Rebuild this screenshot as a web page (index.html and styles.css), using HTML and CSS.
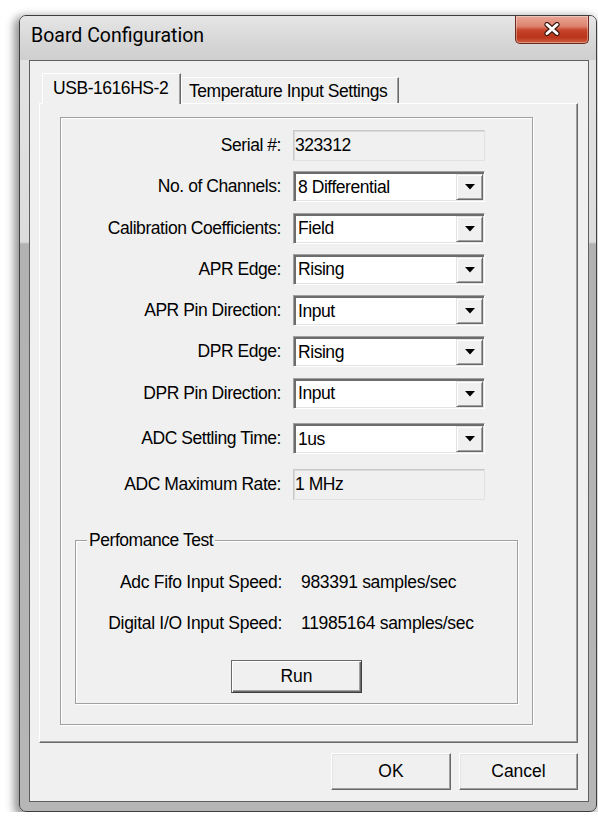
FILE: index.html
```html
<!DOCTYPE html>
<html lang="en">
<head>
<meta charset="utf-8">
<title>Board Configuration</title>
<link rel="stylesheet" href="styles.css">
</head>
<body>
<div class="desk">
  <div class="window">
    <div class="titlebar">
      <span class="title">Board Configuration</span>
      <button class="close" type="button" aria-label="Close">
        <svg width="16" height="14" viewBox="0 0 16 14" aria-hidden="true">
          <path d="M3 2.5 L13 11.5 M13 2.5 L3 11.5" stroke="#3a1810" stroke-width="5.2" stroke-linecap="round" fill="none"/>
          <path d="M3 2.5 L13 11.5 M13 2.5 L3 11.5" stroke="#ffffff" stroke-width="3" stroke-linecap="round" fill="none"/>
        </svg>
      </button>
    </div>

    <div class="client">
      <div class="tabs">
        <div class="tab-strip">
          <div class="tab active">USB-1616HS-2</div>
          <div class="tab">Temperature Input Settings</div>
        </div>
        <div class="tab-panel">
          <div class="sheet">
            <div class="form">
              <span class="lbl">Serial #:</span>
              <div class="field ro">323312</div>

              <span class="lbl">No. of Channels:</span>
              <div class="field combo"><span class="val">8 Differential</span><span class="drop"><svg width="10" height="6" viewBox="0 0 10 6"><polygon points="0,0 10,0 5,5.5" fill="#000"/></svg></span></div>

              <span class="lbl">Calibration Coefficients:</span>
              <div class="field combo"><span class="val">Field</span><span class="drop"><svg width="10" height="6" viewBox="0 0 10 6"><polygon points="0,0 10,0 5,5.5" fill="#000"/></svg></span></div>

              <span class="lbl">APR Edge:</span>
              <div class="field combo"><span class="val">Rising</span><span class="drop"><svg width="10" height="6" viewBox="0 0 10 6"><polygon points="0,0 10,0 5,5.5" fill="#000"/></svg></span></div>

              <span class="lbl">APR Pin Direction:</span>
              <div class="field combo"><span class="val">Input</span><span class="drop"><svg width="10" height="6" viewBox="0 0 10 6"><polygon points="0,0 10,0 5,5.5" fill="#000"/></svg></span></div>

              <span class="lbl">DPR Edge:</span>
              <div class="field combo"><span class="val">Rising</span><span class="drop"><svg width="10" height="6" viewBox="0 0 10 6"><polygon points="0,0 10,0 5,5.5" fill="#000"/></svg></span></div>

              <span class="lbl">DPR Pin Direction:</span>
              <div class="field combo"><span class="val">Input</span><span class="drop"><svg width="10" height="6" viewBox="0 0 10 6"><polygon points="0,0 10,0 5,5.5" fill="#000"/></svg></span></div>

              <span class="lbl gap-a">ADC Settling Time:</span>
              <div class="field combo gap-a"><span class="val">1us</span><span class="drop"><svg width="10" height="6" viewBox="0 0 10 6"><polygon points="0,0 10,0 5,5.5" fill="#000"/></svg></span></div>

              <span class="lbl gap-b">ADC Maximum Rate:</span>
              <div class="field ro gap-b">1 MHz</div>
            </div>

            <div class="group">
              <div class="group-title">Perfomance Test</div>
              <div class="stats">
                <span class="lbl">Adc Fifo Input Speed:</span>
                <span class="stat">983391 samples/sec</span>
                <span class="lbl">Digital I/O Input Speed:</span>
                <span class="stat">11985164 samples/sec</span>
              </div>
              <button class="btn default run" type="button">Run</button>
            </div>
          </div>
        </div>
      </div>

      <div class="actions">
        <button class="btn ok" type="button">OK</button>
        <button class="btn cancel" type="button">Cancel</button>
      </div>
    </div>
  </div>
</div>
</body>
</html>
```

FILE: styles.css
```css
html, body {
  margin: 0;
  background: #ffffff;
}

body {
  font-family: "Liberation Sans", Arial, sans-serif;
  font-size: 17.5px;
  letter-spacing: -0.45px;
  line-height: 21px;
  color: #000;
}

.desk {
  padding: 15px 0 0 19px;
}

/* Aero style window frame */
.window {
  box-sizing: border-box;
  width: 578px;
  height: 797px;
  border: 1px solid #3e3e3e;
  border-radius: 7px;
  background:
    linear-gradient(to bottom, #e4e4e4 0, #dcdcdc 226px, #b2b2b2 228px, #b6b6b6 100%);
  box-shadow: -3px 3px 9px 2px rgba(0, 0, 0, 0.42);
  display: flex;
  flex-direction: column;
  overflow: hidden;
}

.titlebar {
  height: 44px;
  flex: none;
  display: flex;
  align-items: flex-start;
  background: linear-gradient(to bottom, #e6e6e6, #d6d6d6 60%, #cfcfcf);
}

.title {
  font-family: Roboto, "Noto Sans", sans-serif;
  font-size: 19.5px;
  letter-spacing: 0;
  line-height: 24px;
  padding: 8px 0 0 11px;
  color: #000;
}

.close {
  box-sizing: border-box;
  width: 74px;
  height: 28px;
  margin: 0 7px 0 auto;
  padding: 0;
  border: 1px solid #6b2a1d;
  border-top: none;
  border-radius: 0 0 5px 5px;
  background: linear-gradient(to bottom, #e8a595 0%, #dd8470 38%, #c6452b 52%, #b9341b 78%, #cf5d3c 100%);
  box-shadow: inset 0 0 0 1px rgba(255, 255, 255, 0.35);
  display: flex;
  align-items: center;
  justify-content: center;
}

.close svg {
  display: block;
  margin-top: -1px;
}

/* client area */
.client {
  flex: 1;
  margin: 0 7px 9px 9px;
  border: 1px solid #5f5f5f;
  background: #f0f0f0;
  padding: 12px 10px 11px 9px;
  display: flex;
  flex-direction: column;
}

.tabs {
  display: flex;
  flex-direction: column;
  height: 670px;
}

.tab-strip {
  height: 30px;
  display: flex;
  align-items: flex-end;
  padding-left: 3px;
  flex: none;
}

.tab {
  box-sizing: border-box;
  height: 26px;
  padding: 3px 0 0 7px;
  line-height: 21px;
  border-top: 1px solid #fff;
  border-left: 1px solid #fff;
  border-right: 1px solid #696969;
  box-shadow: inset -1px 0 0 #a0a0a0;
  background: #f0f0f0;
  width: 218px;
  white-space: nowrap;
}

.tab.active {
  width: 139px;
  height: 31px;
  margin-bottom: -1px;
  padding: 4px 0 0 10px;
  position: relative;
  z-index: 1;
}

.tab-panel {
  flex: 1;
  border: 1px solid;
  border-color: #fff #696969 #696969 #fff;
  box-shadow: inset -1px -1px 0 #a0a0a0;
  padding: 13px 44px 17px 20px;
  display: flex;
}

.sheet {
  flex: 1;
  border: 1px solid #a0a0a0;
  box-shadow: inset 1px 1px 0 #fff, 1px 1px 0 #fff;
  display: flex;
  flex-direction: column;
}

.form {
  padding-top: 12px;
  display: grid;
  grid-template-columns: 220px 192px;
  column-gap: 12px;
  row-gap: 10.3px;
  align-items: center;
}

.lbl {
  text-align: right;
  white-space: nowrap;
}

.gap-a { margin-top: 4px; }
.gap-b { margin-top: 5px; }

.field {
  box-sizing: border-box;
  height: 31px;
  display: flex;
  align-items: center;
  white-space: nowrap;
}

.field.ro {
  border: 1px solid;
  border-color: #c9c9c9 #e2e2e2 #e2e2e2 #c9c9c9;
  box-shadow: inset 1px 1px 0 #dadada;
  padding-left: 1px;
  background: #f0f0f0;
}

.field.combo {
  border: 1px solid;
  border-color: #a0a0a0 #fff #fff #a0a0a0;
  box-shadow: inset 2px 2px 0 #6c6c6c, inset -1px -1px 0 #e3e3e3;
  background: #fff;
  padding: 2px 1px 1px 2px;
  align-items: stretch;
}

.combo .val {
  flex: 1;
  display: flex;
  align-items: center;
  padding-left: 2px;
}

.drop {
  box-sizing: border-box;
  width: 27px;
  flex: none;
  background: #f0f0f0;
  border: 1px solid;
  border-color: #e3e3e3 #696969 #696969 #e3e3e3;
  box-shadow: inset 1px 1px 0 #fff, inset -1px -1px 0 #a0a0a0;
  display: flex;
  align-items: center;
  justify-content: center;
}

.drop svg {
  display: block;
}

/* performance group box */
.group {
  margin: auto 14px 20px 14px;
  border: 1px solid #a0a0a0;
  box-shadow: inset 1px 1px 0 #fff, 1px 1px 0 #fff;
  display: flex;
  flex-direction: column;
  padding-bottom: 10px;
}

.group-title {
  align-self: flex-start;
  margin: -11px 0 0 11px;
  padding: 0 2px;
  line-height: 21px;
  background: #f0f0f0;
}

.stats {
  display: grid;
  grid-template-columns: 206px auto;
  column-gap: 19px;
  row-gap: 20px;
  margin-top: 21px;
  line-height: 21px;
}

.stats .lbl,
.stats .stat {
  letter-spacing: -0.3px;
}

.btn {
  box-sizing: border-box;
  font: inherit;
  color: #000;
  background: #f0f0f0;
  border: 1px solid;
  border-color: #fff #696969 #696969 #fff;
  box-shadow: inset -1px -1px 0 #a0a0a0, inset 1px 1px 0 #e3e3e3;
  padding: 0;
}

.btn.default {
  border-color: #6a6a6a #3e3e3e #3e3e3e #6a6a6a;
  box-shadow: inset 1px 1px 0 #fff, inset -1px -1px 0 #696969, inset -2px -2px 0 #a0a0a0;
}

.run {
  align-self: center;
  width: 131px;
  height: 33px;
  margin-top: 26px;
}

.actions {
  display: flex;
  justify-content: flex-end;
  gap: 8px;
  margin-top: 10px;
}

.ok,
.cancel {
  height: 37px;
}

.ok { width: 120px; }
.cancel { width: 119px; }
```
